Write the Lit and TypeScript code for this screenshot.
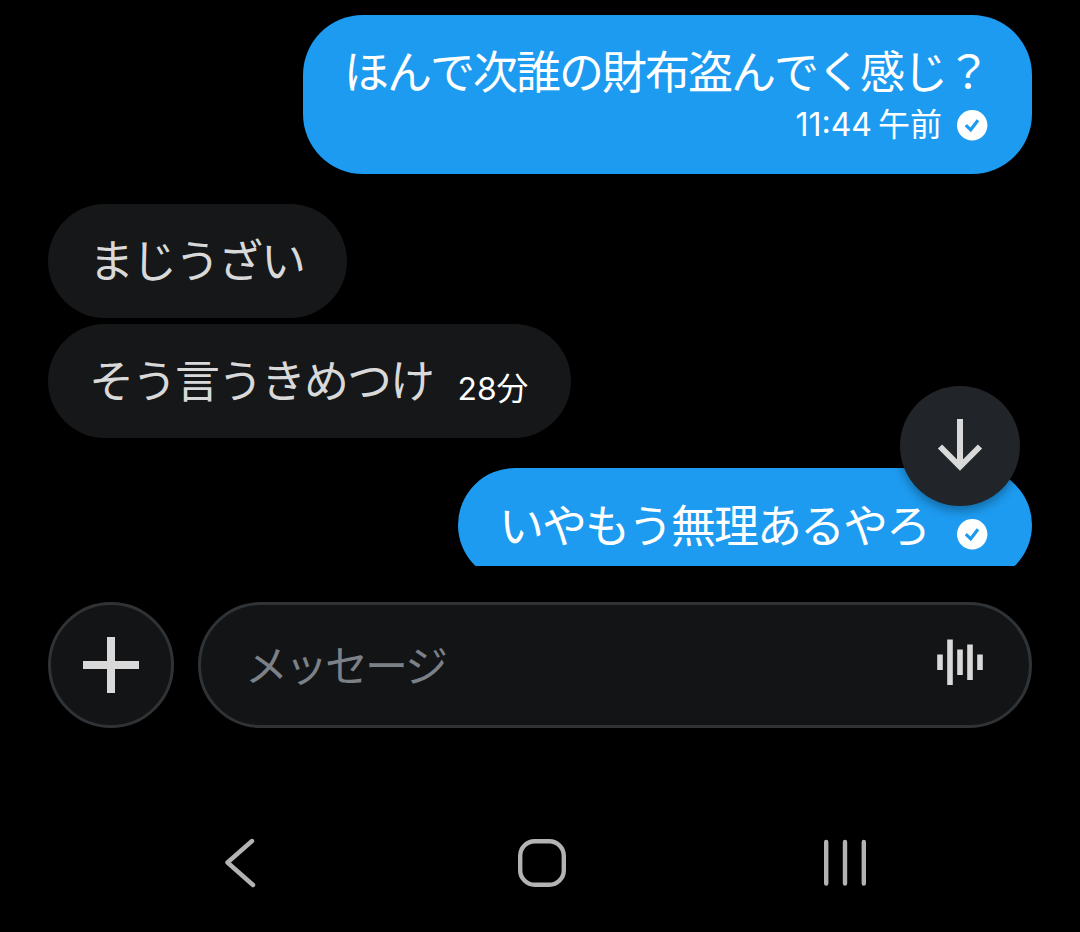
import { LitElement, html, css, svg } from "lit";
import { customElement } from "lit/decorators.js";

const check = html`<svg class="check" width="31" height="31" viewBox="0 0 31 31">
  <circle cx="15.2" cy="15.2" r="15.2" fill="#fff" />
  <path d="M8.8 15.2 L13.7 19.800 L21 10.200" fill="none" stroke="#1d9bf0" stroke-width="3.2" />
</svg>`;

@customElement("chat-bubble")
class ChatBubble extends LitElement {
  static properties = {
    side: { type: String },
    text: { type: String },
    time: { type: String },
    meta: { type: String },
  };
  declare side: string;
  declare text: string;
  declare time: string;
  declare meta: string;

  static styles = css`
    :host { display: flex; }
    .bubble {
      display: flex;
      align-items: flex-start;
      box-sizing: border-box;
      padding: 0 43px 0 41px;
      height: 114px;
      border-radius: 57px;
      font-family: "Noto Sans CJK JP", sans-serif;
      font-size: 45px;
      letter-spacing: -2px;
      font-kerning: none;
      line-height: 60px;
      white-space: nowrap;
    }
    .in { background: #151719; color: #d9d9d9; padding-top: 25px; }
    .out { background: #1d9bf0; color: #fff; margin-left: auto; padding-top: 26px; }
    .stacked {
      flex-direction: column;
      align-items: flex-end;
      height: 159px;
      border-radius: 60px;
      padding-top: 25px;
    }
    .meta { display: flex; align-items: center; }
    .stacked .meta { height: 46px; gap: 15px; padding: 2px 1px 0 0; }
    .time {
      font-family: Inter, "Noto Sans CJK JP", sans-serif;
      font-size: 32px;
      letter-spacing: 0;
      word-spacing: -3px;
      line-height: 46px;
      color: #fff;
    }
    .in .meta { margin-left: 24.5px; padding-top: 17px; }
    .in .time { font-size: 31.8px; }
    .out:not(.stacked) .meta { margin-left: 28px; padding: 25px 1px 0 0; }
    .check { display: block; }
  `;

  render() {
    const stacked = this.meta === "below";
    return html`<div class="bubble ${this.side} ${stacked ? "stacked" : ""}">
      <span class="text">${this.text}</span>
      ${this.meta
        ? html`<span class="meta">
            ${this.time ? html`<span class="time">${this.time}</span>` : ""}
            ${this.side === "out" ? check : ""}
          </span>`
        : ""}
    </div>`;
  }
}

@customElement("app-root")
class AppRoot extends LitElement {
  static styles = css`
    :host {
      display: flex;
      flex-direction: column;
      width: 1080px;
      height: 932px;
      overflow: hidden;
      background: #000;
    }
    .chat {
      position: relative;
      box-sizing: border-box;
      height: 566px;
      padding: 15px 48px 0;
      overflow: hidden;
      display: flex;
      flex-direction: column;
      gap: 30px;
    }
    .group { display: flex; flex-direction: column; gap: 6px; }
    .fab {
      position: absolute;
      right: 60px;
      top: 386px;
      width: 120px;
      height: 120px;
      border-radius: 50%;
      background: #212429;
      box-shadow: 0 5px 10px rgba(0, 0, 0, 0.3);
    }
    .fab svg { display: block; }
    .composer {
      display: flex;
      gap: 24px;
      padding: 36px 48px 0;
    }
    .add, .field {
      box-sizing: border-box;
      height: 126px;
      border: 3px solid #2f3336;
      border-radius: 63px;
      background: #121416;
      display: flex;
      align-items: center;
    }
    .add { width: 126px; justify-content: center; }
    .field { flex: 1; justify-content: space-between; padding: 0 45px 0 44px; }
    .hint {
      font-family: "Noto Sans CJK JP", sans-serif;
      font-size: 43px;
      font-kerning: none;
      line-height: 60px;
      letter-spacing: -3px;
      padding-bottom: 4px;
      color: #7b8187;
    }
    .wave { margin-bottom: 6px; }
    .nav { flex: 1; padding-top: 92px; }
    .nav svg { display: block; }
  `;

  render() {
    return html`
      <div class="chat">
        <chat-bubble side="out" text="ほんで次誰の財布盗んでく感じ？" time="11:44 午前" meta="below"></chat-bubble>
        <div class="group">
          <chat-bubble side="in" text="まじうざい"></chat-bubble>
          <chat-bubble side="in" text="そう言うきめつけ" time="28分" meta="inline"></chat-bubble>
        </div>
        <chat-bubble side="out" text="いやもう無理あるやろ" meta="inline"></chat-bubble>
        <div class="fab">
          <svg width="120" height="120" viewBox="0 0 120 120" fill="none" stroke="#d9d9d9" stroke-width="6">
            <path d="M60 33V80M40 60.5L60 80.5L80 60.5" />
          </svg>
        </div>
      </div>
      <div class="composer">
        <div class="add">
          <svg width="56" height="56" viewBox="0 0 56 56" fill="#d9d9d9">
            <path d="M24 0h8v24h24v8H32v24h-8V32H0v-8h24z" />
          </svg>
        </div>
        <div class="field">
          <span class="hint">メッセージ</span>
          <svg class="wave" width="48" height="48" viewBox="0 0 48 48" fill="#d9d9d9">
            ${[[1, 16.5, 15.5], [11, 1.5, 45.5], [21, 11.5, 25.5], [31, 6.5, 35.5], [41, 16.5, 15.5]].map(
              ([x, y, h]) => svg`<rect x=${x + 0.2} y=${y} width="5.6" height=${h} />`
            )}
          </svg>
        </div>
      </div>
      <div class="nav">
        <svg width="1080" height="90" viewBox="0 820 1080 90" fill="none" stroke="#b3b3b3" stroke-width="4.4" stroke-linecap="round" stroke-linejoin="round">
          <path d="M252 841L227.500 862.500L253 885" />
          <rect x="520.200" y="841.200" width="43.600" height="43.600" rx="14.500" />
          <path d="M826.200 842V883.500M845 842V883.500M863.800 842V883.500" />
        </svg>
      </div>
    `;
  }
}
